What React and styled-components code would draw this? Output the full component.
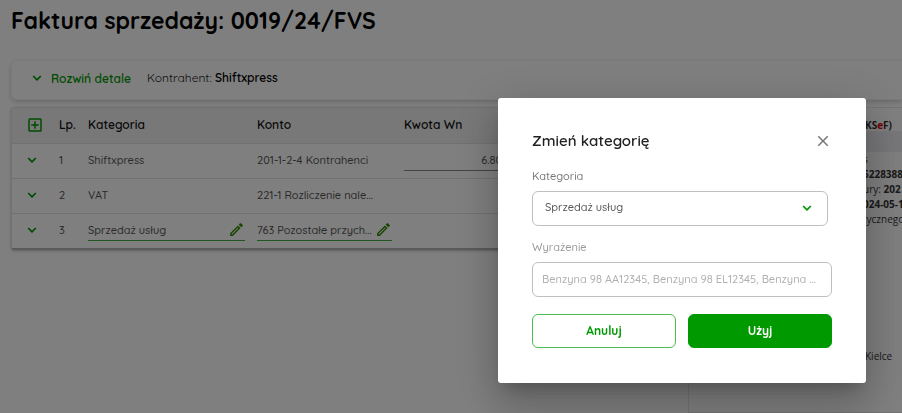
import React, { useState } from 'react';
import styled, { createGlobalStyle, css } from 'styled-components';
import { MdClose, MdOutlineAddBox, MdOutlineEdit } from 'react-icons/md';

const GREEN = '#009900';

const GlobalStyle = createGlobalStyle`
    * {
        box-sizing: border-box;
    }

    body {
        margin: 0;
        background: #fff;
        overflow: hidden;
        font-family: Quicksand, Lato, sans-serif;
        font-size: 12px;
        color: #222;
    }

    button, input, select {
        font-family: inherit;
        font-size: inherit;
    }
`;

// invoice positions
const rows = [
    { lp: 1, category: 'Shiftxpress', account: '201-1-2-4 Kontrahenci', amount: '6.80' },
    { lp: 2, category: 'VAT', account: '221-1 Rozliczenie nale...' },
    { lp: 3, category: 'Sprzedaż usług', account: '763 Pozostałe przych...', editable: true },
];

const Page = styled.main`
    display: flex;
    flex-direction: column;
    min-height: 100vh;
    padding-left: 11px;
`;

const Title = styled.h1`
    margin: 5px 0 23px;
    font-size: 23px;
    line-height: 32px;
    font-weight: 700;
    color: #000;
`;

const DetailsBar = styled.section`
    display: flex;
    align-items: center;
    gap: 16px;
    height: 40px;
    padding: 0 19px 4px;
    border: 1px solid #f4f4f4;
    border-right: 0;
    border-radius: 6px 0 0 6px;
    box-shadow: 0 2px 5px rgba(0, 0, 0, 0.18);
    line-height: 16px;
    font-weight: 400;

    b {
        font-weight: 600;
        color: #000;
    }
`;

const ExpandButton = styled.button`
    display: flex;
    align-items: center;
    gap: 8px;
    padding: 0;
    border: 0;
    background: none;
    font-weight: 600;
    color: ${GREEN};
`;

const Workspace = styled.div`
    display: flex;
    flex: 1;
    align-items: flex-start;
    gap: 9px;
    margin-top: 7px;
`;

const TableCard = styled.section`
    flex: 1;
    min-width: 0;
    border: 1px solid #e2e2e2;
    border-bottom: 2px solid #b4b4b4;
    border-radius: 3px;
    box-shadow: 0 1px 3px rgba(0, 0, 0, 0.25);
`;

const Table = styled.table`
    width: 100%;
    table-layout: fixed;
    border-collapse: collapse;
    line-height: 16px;

    th, td {
        height: 35px;
        padding: 0;
        text-align: left;
        white-space: nowrap;
    }

    th {
        background: #f0f0f0;
        font-weight: 600;
        color: #111;
    }

    td {
        border-top: 1px solid #e2e2e2;
        padding-bottom: 1px;
        font-size: 11px;
        font-weight: 500;
        color: #555;
    }
`;

const Col = styled.col`
    width: ${({ $width }) => $width}px;
`;

const IconButton = styled.button`
    display: flex;
    flex: none;
    padding: 0;
    border: 0;
    background: none;
    color: ${({ $color }) => $color || GREEN};
`;

const RowAction = styled.div`
    padding-left: 14px;
`;

const LineField = styled.div`
    display: flex;
    align-items: center;
    width: ${({ $width }) => $width}px;
    height: 22px;
    border-bottom: 1px solid ${({ $color }) => $color};

    input {
        flex: 1;
        min-width: 0;
        padding: 0;
        border: 0;
        outline: 0;
        background: none;
        font-weight: 500;
        color: #555;
        text-align: ${({ $align }) => $align || 'left'};
    }
`;

const Preview = styled.aside`
    flex: 0 0 214px;
    align-self: stretch;
    overflow: hidden;
    border: 1px solid #e6e6e6;
    border-right: 0;
    font-family: "Open Sans", sans-serif;
    font-size: 10px;
    color: #333;
    white-space: nowrap;
`;

const PreviewTitle = styled.div`
    height: 23px;
    padding: 9px 0 0 176px;
    line-height: 16px;
    font-weight: 700;

    span {
        color: #f00000;
    }
`;

const PreviewBand = styled.div`
    height: 21px;
    background: #eeeef2;
`;

const PreviewLines = styled.div`
    padding-left: 174px;
    line-height: 15px;
`;

const PreviewCity = styled.div`
    margin-top: 121px;
    padding-left: 176px;
    line-height: 16px;
`;

const Overlay = styled.div`
    position: fixed;
    inset: 0;
    display: flex;
    justify-content: flex-end;
    align-items: flex-start;
    padding: 98px 36px 0;
    background: rgba(0, 0, 0, 0.5);
`;

const Dialog = styled.form`
    width: 368px;
    padding: 33px 34px 35px;
    border-radius: 3px;
    background: #fff;
    box-shadow:
        0 11px 15px -7px rgba(0, 0, 0, 0.2),
        0 24px 38px 3px rgba(0, 0, 0, 0.14),
        0 9px 46px 8px rgba(0, 0, 0, 0.12);
`;

const DialogHeader = styled.header`
    display: flex;
    justify-content: space-between;
    align-items: center;
    height: 20px;
    margin-bottom: 17px;

    h2 {
        margin: 0;
        font-size: 15px;
        line-height: 20px;
        font-weight: 600;
        color: #222;
    }
`;

const Label = styled.label`
    display: block;
    margin-bottom: 7px;
    font-size: 11px;
    line-height: 16px;
    font-weight: 500;
    color: ${({ $muted }) => ($muted ? '#999' : '#777')};
`;

const fieldBox = css`
    width: 100%;
    height: 35px;
    border: 1px solid #c0c0c0;
    border-radius: 6px;
    outline: 0;
    background: #fff;
    font-size: 11px;
    font-weight: 500;
    color: #555;
`;

const SelectWrap = styled.div`
    position: relative;
    margin: 0 4px 13px 0;

    select {
        ${fieldBox}
        appearance: none;
        display: block;
        padding: 0 36px 3px 12px;
    }

    svg {
        position: absolute;
        top: 13px;
        right: 15px;
        pointer-events: none;
    }
`;

const TextInput = styled.input`
    ${fieldBox}
    display: block;
    padding: 0 5px 2px 9px;

    &::placeholder {
        color: #b0b0b0;
        opacity: 1;
    }
`;

const Actions = styled.div`
    display: grid;
    grid-template-columns: 1fr 1fr;
    gap: 12px;
    margin-top: 17px;
`;

const ActionButton = styled.button`
    height: 34px;
    padding: 0 0 2px;
    border: 1px solid ${({ $primary }) => ($primary ? GREEN : '#4dbb4d')};
    border-radius: 6px;
    background: ${({ $primary }) => ($primary ? GREEN : '#fff')};
    font-weight: 700;
    color: ${({ $primary }) => ($primary ? '#fff' : GREEN)};
`;

const Chevron = () => (
    <svg width="12" height="8" viewBox="0 0 12 8" fill="none" stroke={GREEN} strokeWidth="1.7" aria-hidden="true">
        <path d="M2.2 2L6 5.8 9.8 2" strokeLinejoin="round" />
    </svg>
);

const EditField = ({ value, width, label }) => (
    <LineField $width={width} $color="#3fae3f">
        <input aria-label={label} defaultValue={value} />
        <IconButton type="button" aria-label={`Edytuj: ${label}`} $color="#2f8a00">
            <MdOutlineEdit size={17} />
        </IconButton>
    </LineField>
);

const PositionsTable = () => (
    <TableCard>
        <Table>
            <colgroup>
                <Col $width={47} />
                <Col $width={29} />
                <Col $width={169} />
                <Col $width={147} />
                <col />
            </colgroup>
            <thead>
                <tr>
                    <th>
                        <RowAction>
                            <IconButton type="button" aria-label="Dodaj pozycję">
                                <MdOutlineAddBox size={18} />
                            </IconButton>
                        </RowAction>
                    </th>
                    <th>Lp.</th>
                    <th>Kategoria</th>
                    <th>Konto</th>
                    <th>Kwota Wn</th>
                </tr>
            </thead>
            <tbody>
                {rows.map((row) => (
                    <tr key={row.lp}>
                        <td>
                            <RowAction>
                                <IconButton type="button" aria-label={`Rozwiń pozycję ${row.lp}`}>
                                    <Chevron />
                                </IconButton>
                            </RowAction>
                        </td>
                        <td>{row.lp}</td>
                        <td>{row.editable ? <EditField value={row.category} width={157} label="Kategoria" /> : row.category}</td>
                        <td>{row.editable ? <EditField value={row.account} width={135} label="Konto" /> : row.account}</td>
                        <td>
                            {row.amount && (
                                <LineField $width={98} $color="#888" $align="right">
                                    <input aria-label="Kwota Wn" defaultValue={row.amount} />
                                </LineField>
                            )}
                        </td>
                    </tr>
                ))}
            </tbody>
        </Table>
    </TableCard>
);

const InvoicePreview = () => (
    <Preview>
        <PreviewTitle>KS<span>e</span>F)</PreviewTitle>
        <PreviewBand />
        <PreviewLines>
            <div>s</div>
            <div><b>5228388</b></div>
            <div>ury: <b>202</b></div>
            <div><b>024-05-1</b></div>
            <div>tycznego</div>
        </PreviewLines>
        <PreviewCity>Kielce</PreviewCity>
    </Preview>
);

const CategoryDialog = () => {
    const [expression, setExpression] = useState('');

    return (
        <Overlay>
            <Dialog role="dialog" aria-labelledby="dialog-title" onSubmit={(e) => e.preventDefault()}>
                <DialogHeader>
                    <h2 id="dialog-title">Zmień kategorię</h2>
                    <IconButton type="button" aria-label="Zamknij" $color="#777">
                        <MdClose size={18} />
                    </IconButton>
                </DialogHeader>
                <Label htmlFor="category">Kategoria</Label>
                <SelectWrap>
                    <select id="category">
                        <option>Sprzedaż usług</option>
                    </select>
                    <Chevron />
                </SelectWrap>
                <Label htmlFor="expression" $muted>Wyrażenie</Label>
                <TextInput
                    id="expression"
                    value={expression}
                    onChange={(e) => setExpression(e.target.value)}
                    placeholder="Benzyna 98 AA12345, Benzyna 98 EL12345, Benzyna ..."
                />
                <Actions>
                    <ActionButton type="button">Anuluj</ActionButton>
                    <ActionButton type="submit" $primary>Użyj</ActionButton>
                </Actions>
            </Dialog>
        </Overlay>
    );
};

const App = () => (
    <>
        <GlobalStyle />
        <Page>
            <Title>Faktura sprzedaży: 0019/24/FVS</Title>
            <DetailsBar>
                <ExpandButton type="button">
                    <Chevron />
                    Rozwiń detale
                </ExpandButton>
                <span>Kontrahent: <b>Shiftxpress</b></span>
            </DetailsBar>
            <Workspace>
                <PositionsTable />
                <InvoicePreview />
            </Workspace>
        </Page>
        <CategoryDialog />
    </>
);

export default App;
